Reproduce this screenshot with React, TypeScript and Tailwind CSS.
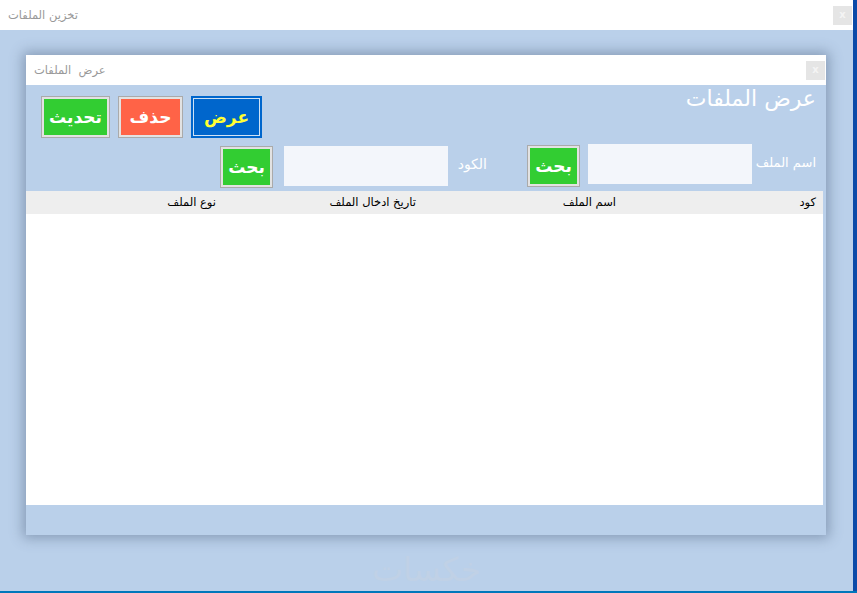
const font = { fontFamily: '"DejaVu Sans", "Liberation Sans", sans-serif' };

function CloseBox({ className }: { className: string }) {
  return (
    <div className={`flex items-center justify-center bg-[#e5e5e5] text-[10px] font-bold leading-none text-[#f4f4f4] ${className}`}>x</div>
  );
}

function ActionButton({ label, className }: { label: string; className: string }) {
  return (
    <div dir="rtl" className={`flex h-[42px] shrink-0 items-center justify-center border border-[#aaaaaa] text-[17px] font-bold leading-none text-white outline-2 -outline-offset-3 outline-[#e2e2e2] ${className}`}>
      {label}
    </div>
  );
}

export default function App() {
  return (
    <div style={font} className="flex h-[593px] w-[857px] flex-col overflow-hidden bg-[#0b4aa8]">
      <div className="flex min-h-0 flex-1 flex-col">
        <div className="flex w-[853px] flex-1 flex-col bg-[#bad0ea]">
          <div className="flex h-[30px] shrink-0 items-center justify-between bg-white pl-2 pr-[1px]">
            <span dir="rtl" className="mt-[2px] text-[11.5px] leading-none text-[#999999]">تخزين الملفات</span>
            <CloseBox className="h-[19px] w-[19px]" />
          </div>
          <div className="flex flex-1 flex-col items-start pl-[26px] pt-[25px]">
            <div className="flex h-[480px] w-[800px] flex-col bg-[#bad0ea] shadow-[0_0_12px_3px_rgba(70,90,120,0.45)]">
              <div className="flex h-[30px] shrink-0 items-center justify-between bg-white pl-2 pr-[1px]">
                <span dir="rtl" className="mt-[2px] whitespace-pre text-[11.5px] leading-none text-[#999999]">عرض  الملفات</span>
                <CloseBox className="h-[19px] w-[19px]" />
              </div>
              <div className="flex h-[59px] shrink-0 items-start justify-between pl-[15px] pr-[10px] pt-[11px]">
                <div className="flex items-start gap-2">
                  <ActionButton label="تحديث" className="w-[69px] bg-[#32cd32]" />
                  <ActionButton label="حذف" className="w-[65px] bg-[#ff6347]" />
                  <div dir="rtl" className="flex h-[42px] w-[71px] items-center justify-center border-2 border-[#0066cc] bg-[#0066cc] text-[17px] font-bold leading-none text-[#ffff33] outline-1 -outline-offset-3 outline-[#cfe2f5]">عرض</div>
                </div>
                <h1 dir="rtl" className="-mt-[11px] whitespace-nowrap text-[22px] font-normal leading-[28px] text-white">عرض الملفات</h1>
              </div>
              <div className="flex h-[47px] shrink-0 pl-[194px] pr-[10px]">
                <ActionButton label="بحث" className="mt-[2px] w-[53px] bg-[#32cd32]" />
                <div className="ml-[11px] mt-[2px] h-[40px] w-[164px] bg-[#f3f6fb]" />
                <span dir="rtl" className="ml-[10px] mt-[8px] w-[29px] whitespace-nowrap text-right text-[14px] leading-[24px] text-white">الكود</span>
                <ActionButton label="بحث" className="ml-[40px] mt-[1px] w-[53px] bg-[#32cd32]" />
                <div className="ml-[8px] h-[40px] w-[164px] bg-[#f3f6fb]" />
                <span dir="rtl" className="ml-[5px] mt-[7px] w-[59px] whitespace-nowrap text-right text-[13px] leading-[24px] text-white">اسم الملف</span>
              </div>
              <div className="flex h-[314px] w-[797px] shrink-0 flex-col bg-white">
                <div className="grid h-[23px] shrink-0 grid-cols-[190px_200px_200px_207px] items-center bg-[#eeeeee] text-[11.5px] leading-none text-black">
                  <span dir="rtl">نوع الملف</span>
                  <span dir="rtl">تاريخ ادخال الملف</span>
                  <span dir="rtl">اسم الملف</span>
                  <span dir="rtl" className="pr-[7px]">كود</span>
                </div>
              </div>
            </div>
            <div dir="rtl" className="ml-[346px] mt-[15px] text-[33px] leading-[40px] text-[#c0d1e6]">خكسات</div>
          </div>
        </div>
      </div>
      <div className="h-[2px] w-full shrink-0 bg-[#0077bb]" />
    </div>
  );
}
